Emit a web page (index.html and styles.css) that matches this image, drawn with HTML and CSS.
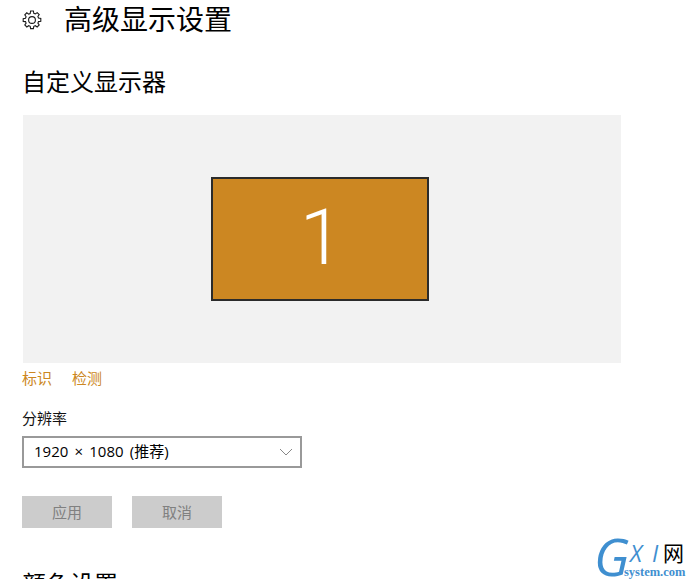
FILE: index.html
```html
<!DOCTYPE html>
<html lang="zh-CN">
<head>
<meta charset="utf-8">
<title>高级显示设置</title>
<link rel="stylesheet" href="styles.css">
</head>
<body>
<main class="page">
  <header class="title-row">
    <svg class="gear" viewBox="0 0 20 20" width="20" height="20" fill="none" stroke="#1a1a1a" stroke-width="1.1" aria-hidden="true">
      <path d="M8.6 1h2.8l.4 2.3 1.5.6 1.9-1.3 2 2-1.3 1.9.6 1.5 2.3.4v2.8l-2.3.4-.6 1.5 1.3 1.9-2 2-1.9-1.3-1.5.6-.4 2.3H8.6l-.4-2.3-1.5-.6-1.9 1.3-2-2 1.3-1.9-.6-1.5L1.2 11.4V8.6l2.3-.4.6-1.5-1.3-1.9 2-2 1.9 1.3 1.5-.6z"/>
      <circle cx="10" cy="10" r="3.4"/>
    </svg>
    <h1 class="title">高级显示设置</h1>
  </header>
  <h2 class="section">自定义显示器</h2>
  <div class="preview">
    <div class="monitor">1</div>
  </div>
  <nav class="links">
    <a class="link">标识</a>
    <a class="link">检测</a>
  </nav>
  <div class="field-label">分辨率</div>
  <div class="select">
    <span>1920 × 1080 (推荐)</span>
    <svg class="chevron" viewBox="0 0 12 6" width="12" height="6" fill="none" stroke="#888" stroke-width="1" aria-hidden="true"><path d="M0 0l6 6 6-6"/></svg>
  </div>
  <div class="actions">
    <button class="btn">应用</button>
    <button class="btn">取消</button>
  </div>
  <h2 class="section section-next">颜色设置</h2>
</main>
<div class="watermark">
  <span class="wm-g">G</span>
  <span class="wm-x">X</span>
  <span class="wm-i">I</span>
  <span class="wm-net">网</span>
  <span class="wm-site">system.com</span>
</div>
</body>
</html>
```
FILE: styles.css
```css
html, body {
  margin: 0;
  height: 579px;
  overflow: hidden;
  background: #fff;
}
body {
  font-family: "Open Sans", "Noto Sans CJK SC", sans-serif;
  color: #000;
  position: relative;
}
.page {
  padding-left: 22px;
  display: flex;
  flex-direction: column;
  align-items: flex-start;
}
.title-row {
  display: flex;
  align-items: center;
  height: 40px;
}
.gear {
  margin-right: 22px;
}
.title {
  margin: -2px 0 0;
  font-size: 28px;
  font-weight: 400;
  line-height: 40px;
}
.section {
  margin: 26px 0 0;
  font-size: 24px;
  font-weight: 400;
  line-height: 32px;
  height: 32px;
}
.preview {
  margin: 17px 0 0 1px;
  width: 598px;
  height: 248px;
  background: #f2f2f2;
  display: flex;
  align-items: center;
  justify-content: center;
}
.monitor {
  box-sizing: border-box;
  width: 218px;
  height: 124px;
  margin-right: 4px;
  background: #cc8722;
  border: 2px solid #2b2b2b;
  color: #fff;
  font-family: "Roboto", sans-serif;
  font-weight: 300;
  font-size: 78px;
  line-height: 118px;
  text-align: center;
  text-indent: 3px;
}
.links {
  margin-top: 5px;
  display: flex;
  gap: 20px;
  height: 20px;
}
.link {
  font-size: 15px;
  line-height: 20px;
  color: #cc8722;
}
.field-label {
  margin-top: 20px;
  font-size: 15px;
  line-height: 20px;
  color: #111;
}
.select {
  box-sizing: border-box;
  margin-top: 8px;
  width: 280px;
  height: 32px;
  border: 2px solid #999;
  padding: 0 10px 3px;
  display: flex;
  align-items: center;
  justify-content: space-between;
  font-size: 15px;
  word-spacing: 2.3px;
}
.chevron {
  margin: 3px -2px 0 0;
}
.actions {
  margin-top: 28px;
  display: flex;
  gap: 20px;
}
.btn {
  width: 90px;
  height: 32px;
  border: 0;
  padding: 0 0 2px;
  background: #ccc;
  color: #808080;
  font: inherit;
  font-size: 15px;
}
.section-next {
  margin-top: 40px;
}
.watermark {
  position: absolute;
  left: 590px;
  top: 532px;
  width: 100px;
  height: 47px;
}
.wm-g {
  position: absolute;
  left: 4px;
  top: 0;
  font: italic 400 52px/47px "Open Sans", sans-serif;
  color: #3f8fd0;
}
.wm-x {
  position: absolute;
  left: 40px;
  top: 11px;
  font: italic 400 23px/20px "Open Sans", sans-serif;
  color: #3f8fd0;
}
.wm-i {
  position: absolute;
  left: 62px;
  top: 11px;
  font: italic 400 23px/20px "Open Sans", sans-serif;
  color: #3f8fd0;
}
.wm-net {
  position: absolute;
  left: 73px;
  top: 9px;
  font-family: "Noto Sans CJK SC", sans-serif;
  font-size: 21px;
  line-height: 22px;
  color: #000;
}
.wm-site {
  position: absolute;
  left: 34px;
  top: 33px;
  font: 700 12.5px/14px "Liberation Serif", serif;
  color: #3f8fd0;
}
```
